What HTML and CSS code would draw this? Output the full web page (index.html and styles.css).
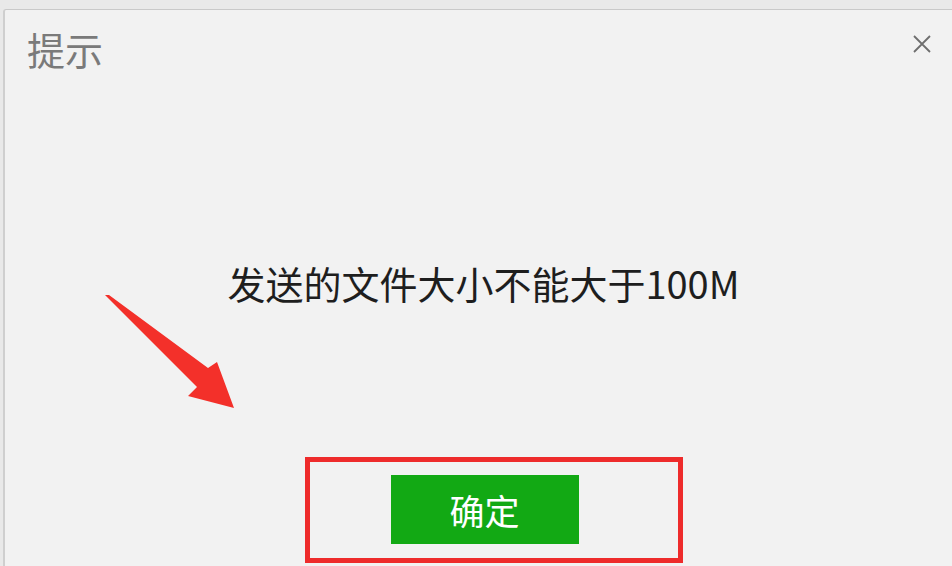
FILE: index.html
```html
<!DOCTYPE html>
<html lang="zh">
<head>
<meta charset="utf-8">
<link rel="stylesheet" href="styles.css">
</head>
<body>
<div class="dialog">
  <div class="header">
    <div class="title">提示</div>
    <svg class="close" width="20" height="20" viewBox="0 0 20 20"><path d="M2 2L18 18M18 2L2 18" stroke="#6e6e6e" stroke-width="1.8" fill="none"/></svg>
  </div>
  <div class="message">发送的文件大小不能大于100M</div>
  <div class="footer">
    <div class="highlight">
      <button class="ok">确定</button>
    </div>
  </div>
</div>
<svg class="arrow" width="952" height="566" viewBox="0 0 952 566">
  <polygon points="105,295 109,295 208,368 217,362 234,408 188,396 197,387" fill="#f3302a"/>
</svg>
</body>
</html>
```

FILE: styles.css
```css
html, body {
  margin: 0;
  padding: 0;
  width: 952px;
  height: 566px;
  overflow: hidden;
  background: #e9e9e9;
  font-family: "Noto Sans CJK SC", "Noto Sans", sans-serif;
}
.dialog {
  box-sizing: border-box;
  margin: 9px 0 0 3px;
  height: 557px;
  background: #f2f2f2;
  border-top: 1px solid #c9c9c9;
  border-left: 2px solid #cfcfcf;
  border-radius: 3px 0 0 0;
  display: flex;
  flex-direction: column;
}
.header {
  display: flex;
  justify-content: space-between;
  align-items: flex-start;
  padding: 15px 20px 0 22px;
}
.title {
  font-size: 38px;
  line-height: 48px;
  color: #7a7a7a;
}
.close {
  margin-top: 9px;
}
.message {
  margin-top: 185px;
  text-align: center;
  padding-left: 10px;
  font-size: 38px;
  line-height: 50px;
  color: #1e1e1e;
}
.footer {
  margin-top: 149px;
  display: flex;
  padding-left: 300px;
}
.highlight {
  box-sizing: border-box;
  width: 378px;
  height: 106px;
  border: 5px solid #ee2b2b;
  display: flex;
  justify-content: center;
  padding-top: 13px;
  padding-right: 19px;
}
.ok {
  width: 188px;
  height: 69px;
  border: none;
  background: #12a914;
  color: #ffffff;
  font-family: "Noto Sans CJK SC", sans-serif;
  font-size: 35px;
  padding: 0;
  line-height: 69px;
}
.arrow {
  position: absolute;
  left: 0;
  top: 0;
  pointer-events: none;
}
```
